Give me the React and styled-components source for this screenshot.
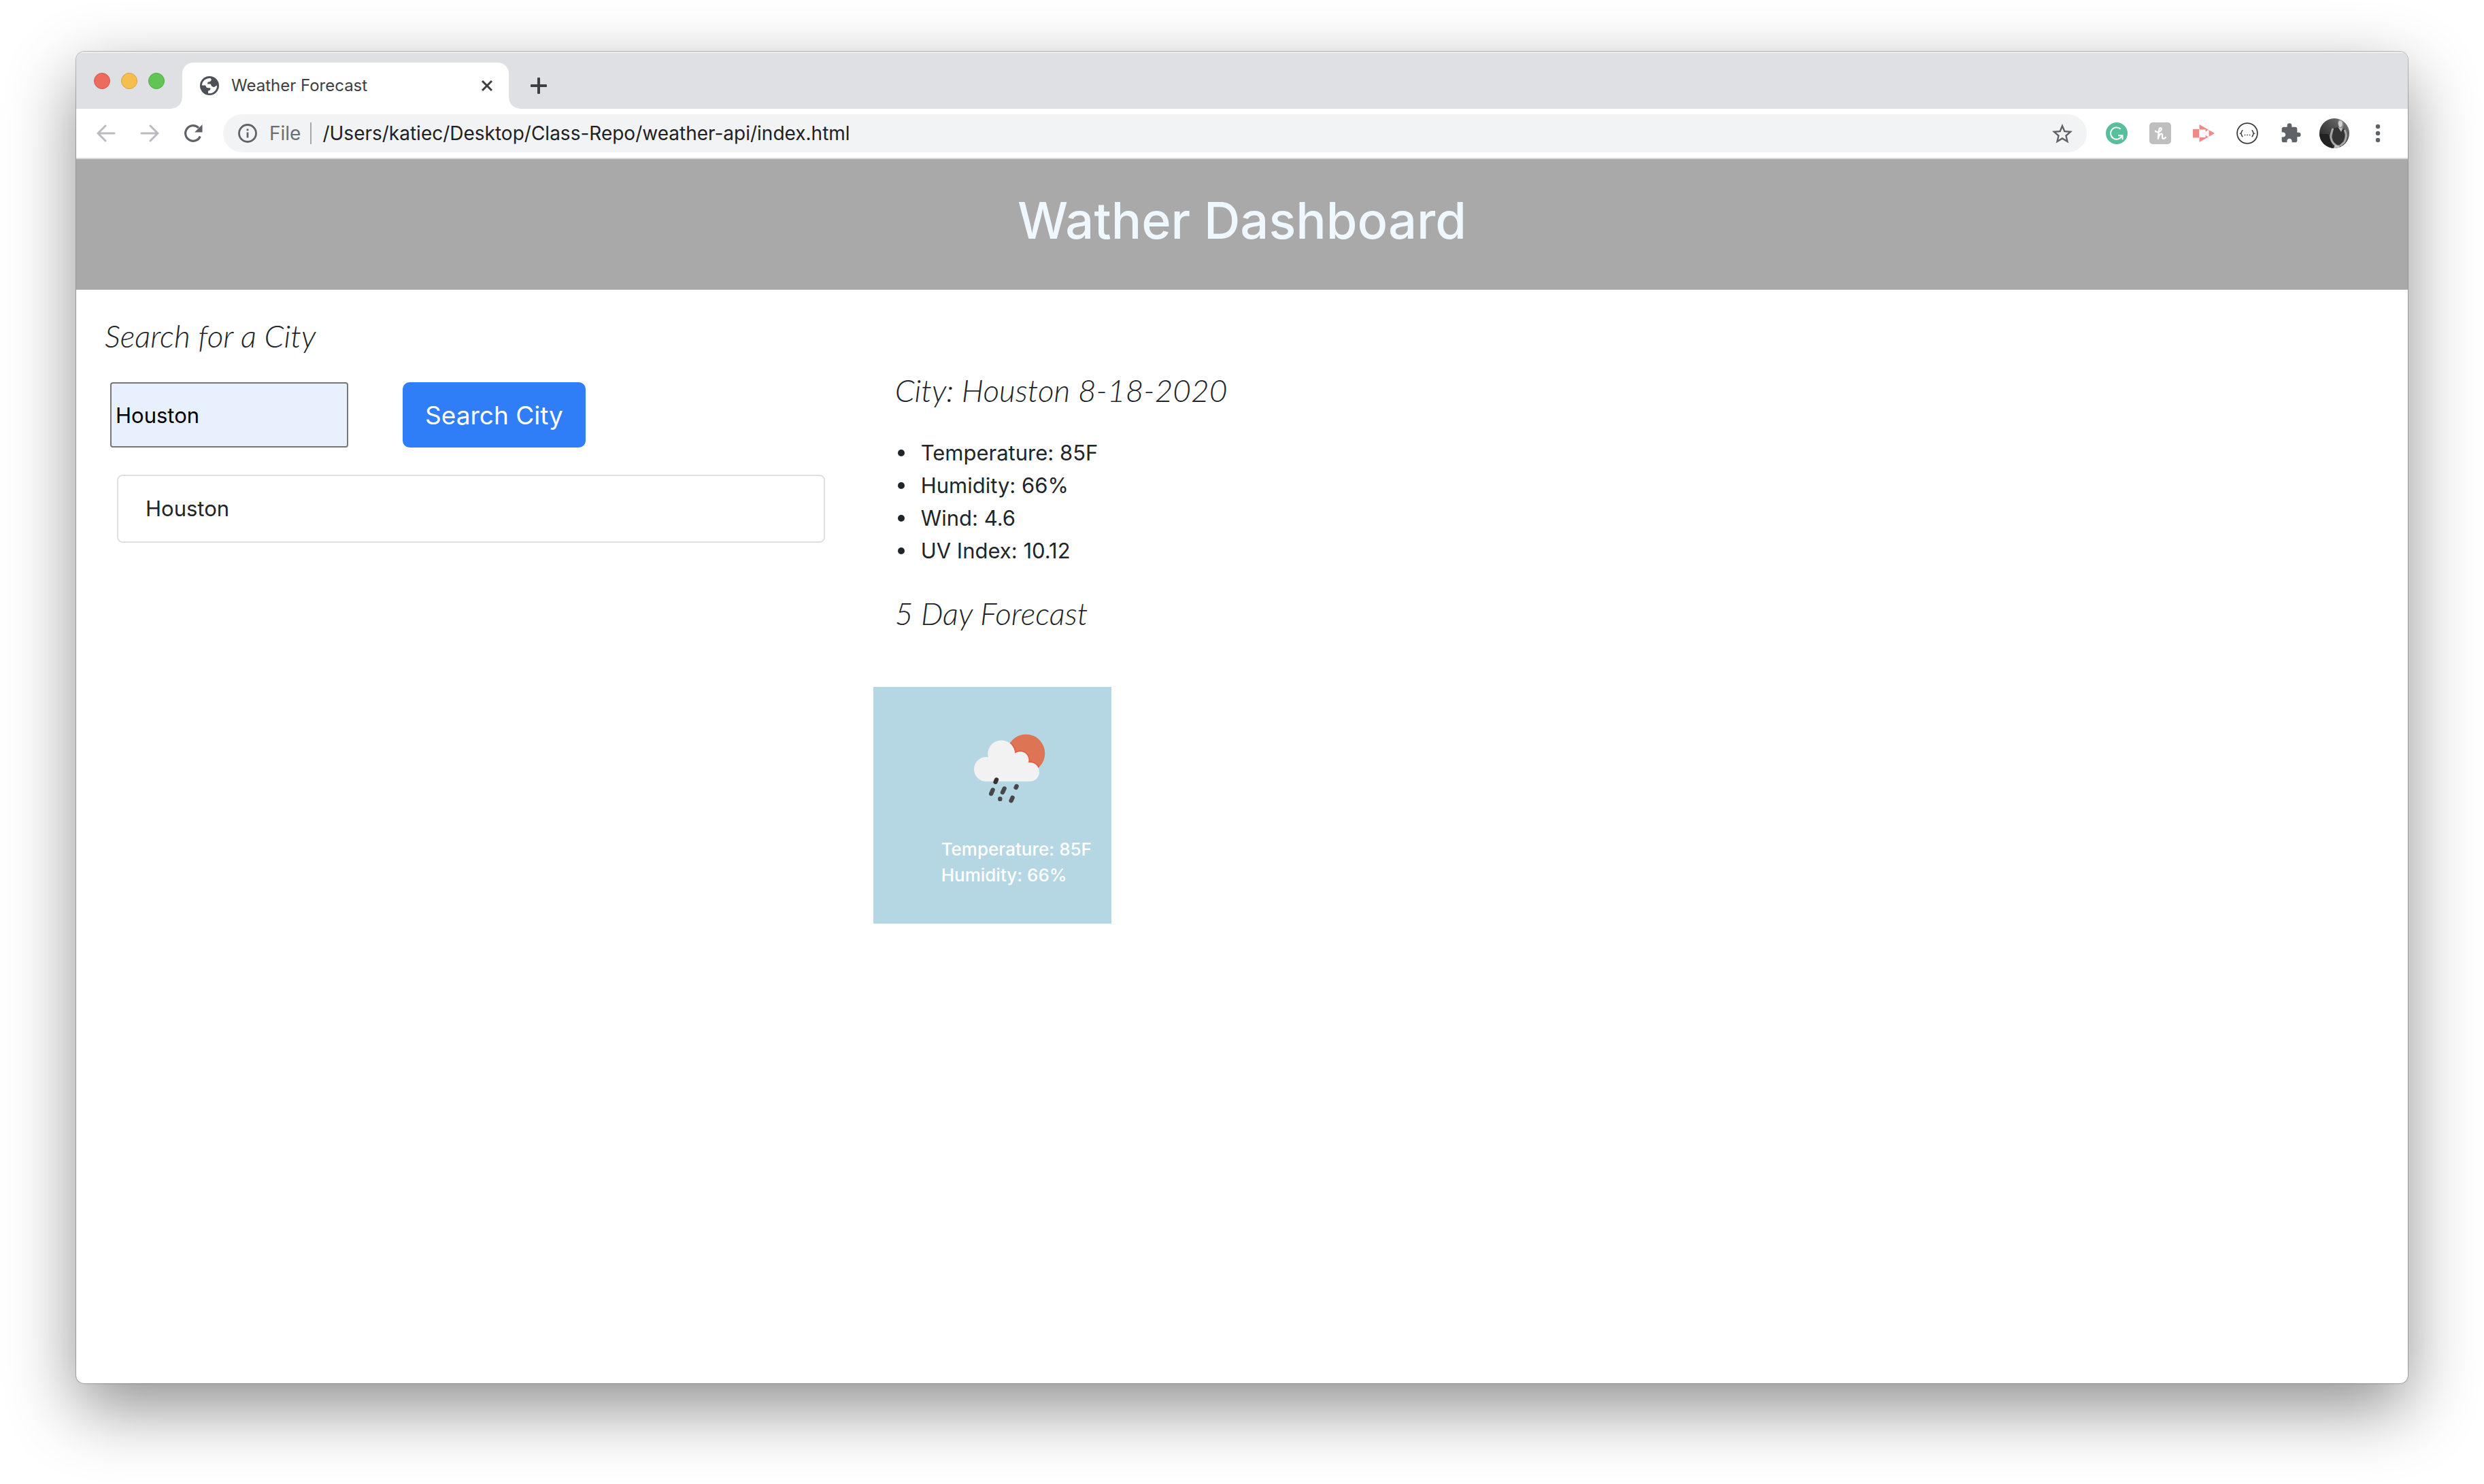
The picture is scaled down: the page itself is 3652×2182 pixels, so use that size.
import React, { useState } from "react";
import styled, { createGlobalStyle } from "styled-components";

const sans = `Inter, "Liberation Sans", sans-serif`;
const display = `Lato, "Open Sans", sans-serif`;

const GlobalStyle = createGlobalStyle`
  *, *::before, *::after { box-sizing: border-box; }
  body { margin: 0; background: #fff; color: #212529; font-family: ${sans}; }
  button, input { font-family: inherit; }
  h1, h2, ul, p { margin: 0; }
`;

const Desktop = styled.div`
  display: flex;
  min-height: 100vh;
  padding: 76px 112px 148px;
`;

const Window = styled.div`
  flex: 1;
  min-width: 0;
  display: flex;
  flex-direction: column;
  background: #fff;
  border-radius: 12px;
  overflow: hidden;
  box-shadow:
    0 0 0 1px rgba(0, 0, 0, 0.24),
    0 36px 100px rgba(0, 0, 0, 0.44);
`;

const TabStrip = styled.div`
  display: flex;
  align-items: flex-end;
  height: 84px;
  background: #dee0e4;
  box-shadow: inset 0 2px 0 #eceef0;
`;

const Lights = styled.div`
  display: flex;
  align-items: center;
  gap: 16px;
  height: 84px;
  padding: 2px 26px 0 26px;
`;

const Light = styled.button`
  width: 24px;
  height: 24px;
  padding: 0;
  border: 1px solid ${(p) => p.$edge};
  border-radius: 50%;
  background: ${(p) => p.$fill};
`;

const Tab = styled.div`
  position: relative;
  display: flex;
  align-items: center;
  width: 480px;
  height: 68px;
  padding: 0 20px 0 26px;
  border-radius: 16px 16px 0 0;
  background: #fff;

  &::before,
  &::after {
    content: "";
    position: absolute;
    bottom: 0;
    width: 16px;
    height: 16px;
  }
  &::before {
    left: -16px;
    background: radial-gradient(circle at 0 0, transparent 15px, #fff 16px);
  }
  &::after {
    right: -16px;
    background: radial-gradient(circle at 100% 0, transparent 15px, #fff 16px);
  }
`;

const TabTitle = styled.span`
  flex: 1;
  margin-left: 18px;
  font-size: 24px;
  line-height: 32px;
  color: #3c4043;
`;

const IconButton = styled.button`
  display: flex;
  align-items: center;
  justify-content: center;
  flex: none;
  width: ${(p) => p.$size || 64}px;
  height: ${(p) => p.$tall || p.$size || 64}px;
  padding: 0;
  border: 0;
  background: none;
  color: ${(p) => p.$color || "#5f6368"};

  svg { display: block; }
`;

const Toolbar = styled.div`
  display: flex;
  align-items: center;
  height: 74px;
  padding: 0 12px;
  border-bottom: 2px solid #d9dae0;
`;

const AddressBar = styled.label`
  flex: 1;
  min-width: 0;
  display: flex;
  align-items: center;
  height: 56px;
  margin: 0 12px;
  padding: 0 4px 0 22px;
  border-radius: 28px;
  background: #f1f3f4;
  font-size: 28px;
  line-height: 36px;
`;

const Scheme = styled.span`
  margin-left: 18px;
  padding-right: 14px;
  border-right: 2px solid #a5a8ab;
  line-height: 32px;
  color: #6b6e72;
`;

const AddressInput = styled.input`
  flex: 1;
  min-width: 0;
  padding: 0 0 0 16px;
  border: 0;
  outline: 0;
  background: none;
  color: #202124;
  font-size: 28px;
  line-height: 36px;
`;

const Banner = styled.header`
  padding: 42px 0 54px;
  background: #a9a9a9;
  text-align: center;
`;

const BannerTitle = styled.h1`
  font-size: 74px;
  font-weight: 500;
  line-height: 96px;
  color: #f0f8ff;
`;

const Columns = styled.main`
  display: grid;
  grid-template-columns: 1fr 2fr;
`;

const SearchColumn = styled.section`
  padding: 38px 42px 40px;
`;

const Heading = styled.h2`
  font-family: ${display};
  font-size: 46px;
  font-style: italic;
  font-weight: 300;
  line-height: 60px;
`;

const SearchForm = styled.form`
  display: flex;
  gap: 80px;
  margin: 38px 0 40px 8px;
`;

const CityInput = styled.input`
  width: 350px;
  height: 96px;
  padding: 0 6px;
  border: 2px solid #767676;
  border-radius: 4px;
  background: #e8f0fe;
  color: #000;
  font-size: 31px;
`;

const SearchButton = styled.button`
  height: 96px;
  padding: 0 33px;
  border: 0;
  border-radius: 10px;
  background: #2f7ef7;
  color: #fff;
  font-size: 37px;
`;

const History = styled.ul`
  margin-left: 18px;
  padding: 0;
  list-style: none;
`;

const HistoryItem = styled.li`
  padding: 24px 40px;
  border: 2px solid #dfdfdf;
  border-radius: 8px;
  font-size: 31px;
  line-height: 48px;
`;

const WeatherColumn = styled.section`
  padding: 118px 29px 40px;
`;

const Current = styled.div`
  padding-left: 32px;
`;

const Readings = styled.ul`
  margin: 38px 0 38px;
  padding-left: 4px;
  list-style: none;
  font-size: 31px;
  line-height: 48px;
`;

const Reading = styled.li`
  display: flex;
  align-items: center;
  gap: 24px;

  &::before {
    content: "";
    width: 10px;
    height: 10px;
    border-radius: 50%;
    background: #212529;
  }
`;

const Card = styled.article`
  width: 350px;
  margin-top: 78px;
  padding: 20px 0 52px 100px;
  background: #b5d7e3;
  color: #fff;
  font-size: 26px;
  font-weight: 500;
  line-height: 38px;

  svg { display: block; }
`;

const GlobeIcon = () => (
  <svg width="28" height="28" viewBox="0 0 28 28" aria-hidden="true">
    <circle cx="14" cy="14" r="14" fill="#4d5056" />
    <path d="M2.800 13.500A11.200 11.200 0 0 1 15.500 3L17 5.500l-2 2.500-3.500.8-.5 2.700h4.500l2 3.500 3 1.200 4.500-2.700A11.200 11.200 0 0 1 12 25.200v-3.400l3-1.500.5-2.800-5.500-.6-2-3.400z" fill="#fff" />
  </svg>
);

const CloseIcon = () => (
  <svg width="18" height="18" viewBox="0 0 18 18" aria-hidden="true">
    <path d="M2 2l14 14M16 2L2 16" stroke="currentColor" strokeWidth="3" />
  </svg>
);

const PlusIcon = () => (
  <svg width="24" height="24" viewBox="0 0 24 24" aria-hidden="true">
    <path d="M12 1.500v21M1.500 12h21" stroke="currentColor" strokeWidth="4" strokeLinecap="round" />
  </svg>
);

const ArrowIcon = ({ forward }) => (
  <svg width="28" height="28" viewBox="0 0 28 28" fill="none" stroke="currentColor" strokeWidth="3" strokeLinecap="round" aria-hidden="true">
    <path d={forward ? "M2 14h23.500M15 3L26 14 15 25" : "M26 14H2.500M13 3L2 14l11 11"} />
  </svg>
);

const ReloadIcon = () => (
  <svg width="28" height="28" viewBox="0 0 28 28" aria-hidden="true">
    <path d="M24.300 18.500A11.300 11.300 0 1 1 22 6" fill="none" stroke="currentColor" strokeWidth="3.200" />
    <path d="M27.500 1v11.500H16z" fill="currentColor" />
  </svg>
);

const InfoIcon = () => (
  <svg width="28" height="28" viewBox="0 0 28 28" aria-hidden="true">
    <circle cx="14" cy="14" r="12.500" fill="none" stroke="#5f6368" strokeWidth="2.800" />
    <path d="M14 12.500v8M14 7.500v2.800" stroke="#5f6368" strokeWidth="2.800" />
  </svg>
);

const StarIcon = () => (
  <svg width="30" height="30" viewBox="0 0 24 24" aria-hidden="true">
    <path fill="currentColor" d="M22 9.240l-7.190-.62L12 2 9.190 8.630 2 9.240l5.460 4.730L5.820 21 12 17.270 18.180 21l-1.630-7.030L22 9.240zM12 15.400l-3.760 2.270 1-4.280-3.320-2.880 4.380-.38L12 6.100l1.710 4.040 4.380.38-3.320 2.880 1 4.280L12 15.400z" transform="translate(-2.400 -1.600) scale(1.200)" />
  </svg>
);

const GrammarlyIcon = () => (
  <svg width="32" height="32" viewBox="0 0 32 32" aria-hidden="true">
    <circle cx="16" cy="16" r="16" fill="#58be9b" />
    <path d="M21.800 9.800A8.700 8.700 0 1 0 23.500 20M18 19.200h6.500v6" fill="none" stroke="#fff" strokeWidth="1.900" />
  </svg>
);

const HoneyIcon = () => (
  <svg width="32" height="32" viewBox="0 0 32 32" aria-hidden="true">
    <rect width="32" height="32" rx="5" fill="#bfbfbf" />
    <path d="M9 12.500c.5 3 8.500 1.500 8.800-2.500.1-2.800-3-2.500-3.500.5L12.800 24c1-4.500 3.200-7.800 5.400-7.200 2.400.7-.7 6.500 1.800 7 1.400.2 3-.6 4-1.800" fill="none" stroke="#fff" strokeWidth="2.200" strokeLinecap="round" strokeLinejoin="round" />
  </svg>
);

const CastIcon = () => (
  <svg width="32" height="32" viewBox="0 0 32 32" aria-hidden="true">
    <path d="M0 10h9v12.500H0zM9.500 3L32 16 9.500 29z" fill="#f08a86" />
    <path d="M9.500 10.500h9v3.300l5-3.300v11.500l-5-3.300v3.300h-9z" fill="#fff" />
  </svg>
);

const BracesIcon = () => (
  <svg width="32" height="32" viewBox="0 0 32 32" fill="none" stroke="#3c3c3c" aria-hidden="true">
    <circle cx="16" cy="16" r="14.900" strokeWidth="1.800" />
    <path d="M9.500 11.500c-2.400 0-1.300 4-3.200 4.700 1.900.7.800 4.700 3.200 4.700M22.500 11.500c2.400 0 1.300 4 3.200 4.700-1.900.7-.8 4.700-3.200 4.700" strokeWidth="1.600" />
    <path d="M11.800 18.500h1.500M15.300 18.500h1.500M18.800 18.500h1.500" strokeWidth="1.500" />
  </svg>
);

const PuzzleIcon = () => (
  <svg width="32" height="32" viewBox="0 0 24 24" aria-hidden="true">
    <path fill="currentColor" d="M20.500 11H19V7c0-1.100-.9-2-2-2h-4V3.500a2.500 2.500 0 0 0-5 0V5H4c-1.100 0-1.990.9-1.990 2v3.800H3.500c1.490 0 2.700 1.210 2.700 2.700s-1.210 2.700-2.700 2.700H2V20c0 1.100.9 2 2 2h3.800v-1.500c0-1.490 1.210-2.700 2.700-2.700s2.700 1.210 2.700 2.700V22H17c1.100 0 2-.9 2-2v-4h1.500a2.500 2.500 0 0 0 0-5z" />
  </svg>
);

const Avatar = () => (
  <svg width="44" height="44" viewBox="0 0 44 44" aria-hidden="true">
    <defs>
      <clipPath id="avatar-clip"><circle cx="22" cy="22" r="22" /></clipPath>
      <linearGradient id="avatar-bg" x1="0" x2="1" y1="1" y2="0">
        <stop offset="0" stopColor="#1a1a1a" />
        <stop offset="0.5" stopColor="#484848" />
        <stop offset="1" stopColor="#7c7c7c" />
      </linearGradient>
    </defs>
    <g clipPath="url(#avatar-clip)">
      <rect width="44" height="44" fill="url(#avatar-bg)" />
      <path d="M0 23h13l4 10 3 11H0z" fill="#222" />
      <path d="M28 3c4-3 8 1 7.500 7L34 16l-5-2c-1-4-3-8-1-11z" fill="#8e8e8e" />
      <path d="M29 4c3-1.500 5 1 4.500 5-.5 3-2 4.500-3.500 4-2-1.500-3-7-1-9z" fill="#d0d0d0" />
      <path d="M20 15l7-2 5 5 4-3 2 3-1 10-2 10H21l-1-12z" fill="#333" />
      <path d="M19.500 16c-1.500 5-3.500 9-2.500 13 1 5 3 8 7 10.500M37.500 18c3 6 2 12-1 17l-5 4.500" fill="none" stroke="#a8a8a8" strokeWidth="3" strokeLinecap="round" />
      <path d="M23 39l8 1-3 4h-7z" fill="#c2c2c2" />
      <path d="M27.500 13l4.500 7 2-5z" fill="#bdbdbd" />
    </g>
  </svg>
);

const MenuIcon = () => (
  <svg width="8" height="28" viewBox="0 0 8 28" fill="currentColor" aria-hidden="true">
    <circle cx="4" cy="4" r="3.200" />
    <circle cx="4" cy="14" r="3.200" />
    <circle cx="4" cy="24" r="3.200" />
  </svg>
);

const Cloud = () => (
  <>
    <circle cx="66" cy="101" r="18" />
    <circle cx="88.300" cy="78.500" r="20" />
    <circle cx="116" cy="87.500" r="12.500" />
    <circle cx="130" cy="105" r="14" />
    <path d="M66 85h50l14 10v24H66z" />
  </>
);

const RainIcon = () => (
  <svg width="200" height="200" viewBox="0 0 200 200" role="img" aria-label="Light rain">
    <defs>
      <clipPath id="sun-clip"><circle cx="124.300" cy="77.700" r="28" /></clipPath>
    </defs>
    <circle cx="124.300" cy="77.700" r="28" fill="#dd7555" />
    <g fill="#e05a3a" stroke="#e05a3a" strokeWidth="3" clipPath="url(#sun-clip)"><Cloud /></g>
    <g fill="#f2f2f2"><Cloud /></g>
    <g stroke="#48484a" strokeWidth="6.400" strokeLinecap="round">
      <path d="M81 116.500l-1.400 3.200" stroke="#333" />
      <path d="M75.600 131.500l-2.400 5.500M92.600 129.500l-2.600 5.500M110.600 126l-1 2M86.300 144.500v.4M104.600 142.800l-2 4.500" />
    </g>
  </svg>
);

const extensions = [
  ["Grammarly", GrammarlyIcon],
  ["Honey", HoneyIcon],
  ["Screen recorder", CastIcon],
  ["JSON viewer", BracesIcon],
  ["Extensions", PuzzleIcon],
  ["Profile", Avatar],
  ["Menu", MenuIcon],
];

const readings = ["Temperature: 85F", "Humidity: 66%", "Wind: 4.6", "UV Index: 10.12"];
const forecast = [{ temperature: "85F", humidity: "66%" }];

export default function App() {
  const [address, setAddress] = useState("/Users/katiec/Desktop/Class-Repo/weather-api/index.html");
  const [city, setCity] = useState("Houston");
  const [history, setHistory] = useState(["Houston"]);

  const search = (event) => {
    event.preventDefault();
    if (city && !history.includes(city)) setHistory([...history, city]);
  };

  return (
    <>
      <GlobalStyle />
      <Desktop>
        <Window>
          <TabStrip>
            <Lights>
              <Light aria-label="Close window" $fill="#ed6a5e" $edge="#d8574c" />
              <Light aria-label="Minimize window" $fill="#f5bf4f" $edge="#dda23b" />
              <Light aria-label="Zoom window" $fill="#61c554" $edge="#50ab43" />
            </Lights>
            <Tab>
              <GlobeIcon />
              <TabTitle>Weather Forecast</TabTitle>
              <IconButton $size={24} $color="#3c4043" aria-label="Close tab"><CloseIcon /></IconButton>
            </Tab>
            <IconButton $size={88} $tall={68} $color="#3c4043" aria-label="New tab"><PlusIcon /></IconButton>
          </TabStrip>
          <Toolbar>
            <IconButton $color="#b9bbbe" aria-label="Back"><ArrowIcon /></IconButton>
            <IconButton $color="#b9bbbe" aria-label="Forward"><ArrowIcon forward /></IconButton>
            <IconButton aria-label="Reload"><ReloadIcon /></IconButton>
            <AddressBar>
              <InfoIcon />
              <Scheme>File</Scheme>
              <AddressInput aria-label="Address" value={address} onChange={(e) => setAddress(e.target.value)} />
              <IconButton aria-label="Bookmark this page"><StarIcon /></IconButton>
            </AddressBar>
            {extensions.map(([name, Icon]) => (
              <IconButton key={name} aria-label={name}><Icon /></IconButton>
            ))}
          </Toolbar>
          <Banner>
            <BannerTitle>Wather Dashboard</BannerTitle>
          </Banner>
          <Columns>
            <SearchColumn>
              <Heading as="label" htmlFor="city">Search for a City</Heading>
              <SearchForm onSubmit={search}>
                <CityInput id="city" value={city} onChange={(e) => setCity(e.target.value)} />
                <SearchButton type="submit">Search City</SearchButton>
              </SearchForm>
              <History>
                {history.map((name) => (
                  <HistoryItem key={name}>{name}</HistoryItem>
                ))}
              </History>
            </SearchColumn>
            <WeatherColumn>
              <Current>
                <Heading>City: Houston 8-18-2020</Heading>
                <Readings>
                  {readings.map((text) => (
                    <Reading key={text}>{text}</Reading>
                  ))}
                </Readings>
                <Heading>5 Day Forecast</Heading>
              </Current>
              {forecast.map((day, i) => (
                <Card key={i}>
                  <RainIcon />
                  <p>Temperature: {day.temperature}</p>
                  <p>Humidity: {day.humidity}</p>
                </Card>
              ))}
            </WeatherColumn>
          </Columns>
        </Window>
      </Desktop>
    </>
  );
}
